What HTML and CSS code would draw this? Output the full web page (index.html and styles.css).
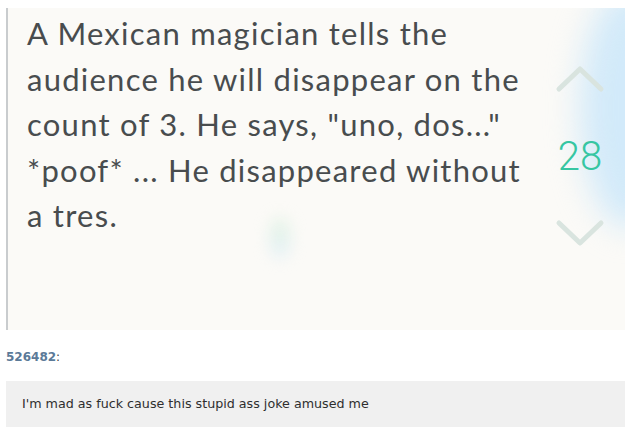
FILE: index.html
```html
<!DOCTYPE html>
<html>
<head>
<meta charset="utf-8">
<link rel="stylesheet" href="styles.css">
</head>
<body>
<div class="page">
  <div class="post">
    <div class="blur blur-blue"></div>
    <div class="blur blur-green"></div>
    <p class="joke">A Mexican magician tells the audience he will disappear on the count of 3. He says, "uno, dos..." *poof* ... He disappeared without a tres.</p>
    <div class="votes">
      <svg class="chev" width="50" height="30" viewBox="0 0 50 30"><path d="M4 25 L25 5 L46 25" fill="none" stroke="#d9e4df" stroke-width="5" stroke-linecap="round" stroke-linejoin="round"/></svg>
      <div class="count">28</div>
      <svg class="chev" width="50" height="30" viewBox="0 0 50 30"><path d="M4 5 L25 25 L46 5" fill="none" stroke="#d9e4df" stroke-width="5" stroke-linecap="round" stroke-linejoin="round"/></svg>
    </div>
  </div>
  <div class="author"><span class="name">526482</span>:</div>
  <div class="comment">I'm mad as fuck cause this stupid ass joke amused me</div>
</div>
</body>
</html>
```
FILE: styles.css
```css
html, body {
  margin: 0;
  padding: 0;
  background: #ffffff;
}
.page {
  padding: 8px 0 0 6px;
  width: 619px;
}
.post {
  position: relative;
  overflow: hidden;
  height: 322px;
  background: #fbfaf7;
  border-left: 2px solid #c9ccce;
  display: flex;
  justify-content: space-between;
  box-sizing: border-box;
}
.blur {
  position: absolute;
  border-radius: 50%;
  filter: blur(16px);
}
.blur-blue {
  right: -55px;
  top: -20px;
  width: 100px;
  height: 240px;
  background: rgba(205, 232, 250, 0.9);
}
.blur-green {
  left: 262px;
  top: 210px;
  width: 20px;
  height: 40px;
  filter: blur(8px);
  background: linear-gradient(180deg, rgba(215, 240, 215, 0.7), rgba(215, 235, 250, 0.7));
}
.joke {
  position: relative;
  margin: 3px 0 0 19px;
  width: 512px;
  font-family: Lato, "Open Sans", sans-serif;
  font-size: 31px;
  line-height: 45.5px;
  color: #484c4e;
  letter-spacing: 1.25px;
}
.votes {
  position: relative;
  display: flex;
  flex-direction: column;
  align-items: center;
  margin: 56px 20px 0 0;
  width: 50px;
}
.count {
  font-family: Roboto, "Open Sans", sans-serif;
  font-weight: 300;
  font-size: 40px;
  line-height: 40px;
  color: #36c6a2;
  margin: 43px 0 41px;
}
.author {
  margin: 17px 0 0 0;
  font-family: "DejaVu Sans", Verdana, sans-serif;
  font-size: 12px;
  color: #444;
  height: 20px;
  line-height: 20px;
}
.name {
  font-weight: bold;
  color: #5b7a98;
}
.comment {
  margin-top: 14px;
  background: #f0f0f0;
  height: 46px;
  padding: 0 0 0 16px;
  font-family: "DejaVu Sans", Verdana, sans-serif;
  font-size: 12.7px;
  line-height: 46px;
  color: #2e2e2e;
}
```
